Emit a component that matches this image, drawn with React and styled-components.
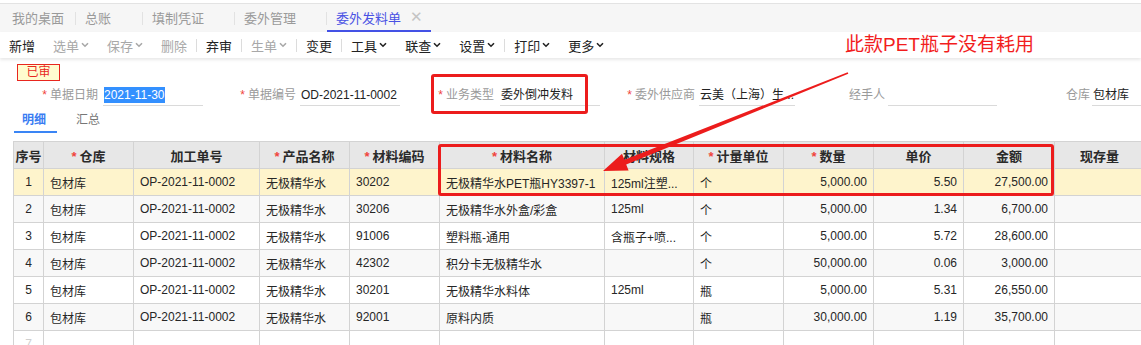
import styled, { createGlobalStyle } from "styled-components";

const GlobalStyle = createGlobalStyle`
  html, body {
    margin: 0;
    padding: 0;
    background: #fff;
    overflow: hidden;
  }
  body {
    font-family: "Liberation Sans", "Noto Sans CJK SC", sans-serif;
    color: #333;
  }
`;

const Page = styled.div`
  position: relative;
  width: 1141px;
  height: 345px;
  overflow: hidden;
`;

/* ---------- top tabs ---------- */
const TabBar = styled.div`
  margin-top: 3px;
  height: 28px;
  padding-left: 3px;
  border-top: 1px solid #e3e3e3;
  background: #f6f6f6;
  display: flex;
  font-size: 13px;
`;

const Tab = styled.div`
  position: relative;
  box-sizing: border-box;
  width: ${(p) => p.$w}px;
  padding-left: 9px;
  display: flex;
  align-items: center;
  gap: 9px;
  color: ${(p) => (p.$active ? "#4a52e4" : "#9a9a9a")};
  border-bottom: 2px solid ${(p) => (p.$active ? "#4452e6" : "transparent")};

  &::after {
    content: "";
    display: ${(p) => (p.$active ? "none" : "block")};
    position: absolute;
    right: 0;
    top: 8px;
    width: 1px;
    height: 13px;
    background: #e2e2e2;
  }
`;

const Close = styled.span`
  color: #c4c4c4;
  font-size: 15px;
`;

/* ---------- toolbar ---------- */
const Toolbar = styled.div`
  position: relative;
  z-index: 1;
  height: 26px;
  display: flex;
  align-items: center;
  font-size: 13px;
  background: #fff;
  box-shadow: 0 2px 3px rgba(0, 0, 0, 0.09);
`;

const ToolItem = styled.span`
  display: inline-flex;
  align-items: center;
  gap: 2px;
  padding: 0 9px;
  color: ${(p) => (p.$disabled ? "#a8a8a8" : "#222")};
`;

const ToolSep = styled.span`
  width: 1px;
  height: 13px;
  background: #dcdcdc;
`;

const Note = styled.div`
  position: absolute;
  left: 845px;
  top: 0;
  line-height: 26px;
  font-size: 19px;
  color: #f21d1d;
`;

const Chevron = () => (
  <svg width="8" height="6" viewBox="0 0 8 6">
    <path d="M1 1.2 L4 4.2 L7 1.2" fill="none" stroke="currentColor" strokeWidth="1.6" />
  </svg>
);

/* ---------- form ---------- */
const FormArea = styled.div`
  position: relative;
  height: 83px;
  padding-top: 6px;
  box-sizing: border-box;
`;

const Stamp = styled.div`
  margin-left: 17px;
  width: 43px;
  height: 17px;
  box-sizing: border-box;
  border: 1px solid #e8261e;
  background: #fffccf;
  color: #e8261e;
  font-size: 12px;
  line-height: 15px;
  text-align: center;
`;

const FieldRow = styled.div`
  display: flex;
  margin-top: 4px;
  font-size: 12px;
`;

const Field = styled.div`
  display: flex;
  align-items: stretch;
`;

const Label = styled.div`
  width: ${(p) => p.$w}px;
  box-sizing: border-box;
  padding-right: ${(p) => p.$pr ?? 5}px;
  text-align: right;
  line-height: 21px;
  color: #9a9a9a;
  white-space: nowrap;
`;

const Star = styled.span`
  color: #f0443c;
  margin-right: 3px;
`;

const Value = styled.div`
  width: ${(p) => p.$w}px;
  height: 21px;
  box-sizing: border-box;
  padding-left: 1px;
  line-height: 21px;
  border-bottom: 1px solid #dadada;
  color: #222;
  white-space: nowrap;
  overflow: hidden;
`;

const Selected = styled.span`
  background: #3390ff;
  color: #fff;
  padding: 1px 0;
`;

const Mark = styled.div`
  position: absolute;
  left: ${(p) => p.$x}px;
  top: ${(p) => p.$y}px;
  width: ${(p) => p.$w}px;
  height: ${(p) => p.$h}px;
  box-sizing: border-box;
  border: 3px solid #ec1c1c;
  border-radius: 3px;
  pointer-events: none;
`;

const SubTabs = styled.div`
  display: flex;
  margin-left: 14px;
  margin-top: 1px;
  height: 26px;
  font-size: 12px;
`;

const SubTab = styled.div`
  width: 43px;
  box-sizing: border-box;
  padding-left: 8px;
  margin-right: 11px;
  line-height: 26px;
  color: ${(p) => (p.$active ? "#3a7df2" : "#777")};
  font-weight: ${(p) => (p.$active ? 700 : 400)};
  border-bottom: 2px solid ${(p) => (p.$active ? "#3a85f5" : "transparent")};
`;

/* ---------- table ---------- */
const TableWrap = styled.div`
  position: relative;
  padding-left: 13px;
`;

const Grid = styled.table`
  border-collapse: collapse;
  table-layout: fixed;
  width: 1131px;
  font-size: 12px;

  th,
  td {
    border: 1px solid #d3d3d3;
    padding: 0 6px;
    height: 26px;
    white-space: nowrap;
    overflow: hidden;
  }

  th {
    padding: 0;
    background: #e7e7e7;
    font-size: 13px;
    font-weight: 700;
    color: #2a2a2a;
    text-align: center;
  }
`;

const Row = styled.tr`
  background: ${(p) => (p.$sel ? "#fef4cc" : p.$alt ? "#f8f8f8" : "#fff")};
`;

const Cell = styled.td`
  text-align: ${(p) => p.$align || "left"};
  color: ${(p) => (p.$muted ? "#cfcfcf" : "#262626")};
`;

const columns = [
  { w: 30, t: "序号" },
  { w: 90, t: "仓库", req: true },
  { w: 126, t: "加工单号" },
  { w: 90, t: "产品名称", req: true },
  { w: 90, t: "材料编码", req: true },
  { w: 165, t: "材料名称", req: true },
  { w: 89, t: "材料规格" },
  { w: 90, t: "计量单位", req: true },
  { w: 90, t: "数量", req: true },
  { w: 90, t: "单价" },
  { w: 91, t: "金额" },
  { w: 90, t: "现存量" },
];

const rows = [
  ["30202", "无极精华水PET瓶HY3397-1", "125ml注塑...", "个", "5,000.00", "5.50", "27,500.00"],
  ["30206", "无极精华水外盒/彩盒", "125ml", "个", "5,000.00", "1.34", "6,700.00"],
  ["91006", "塑料瓶-通用", "含瓶子+喷...", "个", "5,000.00", "5.72", "28,600.00"],
  ["42302", "积分卡无极精华水", "", "个", "50,000.00", "0.06", "3,000.00"],
  ["30201", "无极精华水料体", "125ml", "瓶", "5,000.00", "5.31", "26,550.00"],
  ["92001", "原料内质", "", "瓶", "30,000.00", "1.19", "35,700.00"],
];

const Arrow = styled.svg`
  position: absolute;
  left: 0;
  top: 0;
  z-index: 3;
  pointer-events: none;
`;

const tools = [
  { t: "新增" },
  { t: "选单", dis: true, menu: true },
  { t: "保存", dis: true, menu: true },
  { t: "删除", dis: true },
  "sep",
  { t: "弃审" },
  "sep",
  { t: "生单", dis: true, menu: true },
  "sep",
  { t: "变更" },
  "sep",
  { t: "工具", menu: true },
  { t: "联查", menu: true },
  { t: "设置", menu: true },
  "sep",
  { t: "打印", menu: true },
  { t: "更多", menu: true },
];

export default function App() {
  return (
    <Page>
      <GlobalStyle />
      <TabBar>
        <Tab $w={73}>我的桌面</Tab>
        <Tab $w={67}>总账</Tab>
        <Tab $w={92}>填制凭证</Tab>
        <Tab $w={92}>委外管理</Tab>
        <Tab $w={104} $active>
          委外发料单<Close>✕</Close>
        </Tab>
      </TabBar>

      <Toolbar>
        {tools.map((it, i) =>
          it === "sep" ? (
            <ToolSep key={i} />
          ) : (
            <ToolItem key={i} $disabled={it.dis}>
              {it.t}
              {it.menu && <Chevron />}
            </ToolItem>
          )
        )}
        <Note>此款PET瓶子没有耗用</Note>
      </Toolbar>

      <FormArea>
        <Stamp>已审</Stamp>
        <FieldRow>
          <Field>
            <Label $w={103}><Star>*</Star>单据日期</Label>
            <Value $w={100}><Selected>2021-11-30</Selected></Value>
          </Field>
          <Field>
            <Label $w={97} $pr={4}><Star>*</Star>单据编号</Label>
            <Value $w={100}>OD-2021-11-0002</Value>
          </Field>
          <Field>
            <Label $w={100} $pr={6}><Star>*</Star>业务类型</Label>
            <Value $w={100}>委外倒冲发料</Value>
          </Field>
          <Field>
            <Label $w={99} $pr={4}><Star>*</Star>委外供应商</Label>
            <Value $w={96}>云美（上海）生...</Value>
          </Field>
          <Field>
            <Label $w={93} $pr={3}>经手人</Label>
            <Value $w={109} />
          </Field>
          <Field>
            <Label $w={95} $pr={2}>仓库</Label>
            <Value $w={100}>包材库</Value>
          </Field>
        </FieldRow>
        <SubTabs>
          <SubTab $active>明细</SubTab>
          <SubTab>汇总</SubTab>
        </SubTabs>
        <Mark $x={431} $y={16} $w={157} $h={40} />
      </FormArea>

      <TableWrap>
        <Grid>
          <colgroup>
            {columns.map((c) => (
              <col key={c.t} style={{ width: c.w }} />
            ))}
          </colgroup>
          <thead>
            <tr>
              {columns.map((c) => (
                <th key={c.t}>
                  {c.req && <Star>*</Star>}
                  {c.t}
                </th>
              ))}
            </tr>
          </thead>
          <tbody>
            {rows.map((r, i) => (
              <Row key={i} $sel={i === 0} $alt={i % 2 === 1}>
                <Cell $align="center">{i + 1}</Cell>
                <Cell>包材库</Cell>
                <Cell>OP-2021-11-0002</Cell>
                <Cell>无极精华水</Cell>
                <Cell>{r[0]}</Cell>
                <Cell>{r[1]}</Cell>
                <Cell>{r[2]}</Cell>
                <Cell>{r[3]}</Cell>
                <Cell $align="right">{r[4]}</Cell>
                <Cell $align="right">{r[5]}</Cell>
                <Cell $align="right">{r[6]}</Cell>
                <Cell />
              </Row>
            ))}
            <Row>
              <Cell $align="center" $muted>7</Cell>
              {columns.slice(1).map((c) => (
                <Cell key={c.t} />
              ))}
            </Row>
          </tbody>
        </Grid>
        <Mark $x={438} $y={3} $w={616} $h={52} />
      </TableWrap>

      <Arrow width="1141" height="345" viewBox="0 0 1141 345">
        <polygon
          points="847.7,72.3 624.4,159.8 622.0,153.7 603,171 628.6,170.5 626.2,164.4 848.3,73.7"
          fill="#ec1c1c"
        />
      </Arrow>
    </Page>
  );
}
